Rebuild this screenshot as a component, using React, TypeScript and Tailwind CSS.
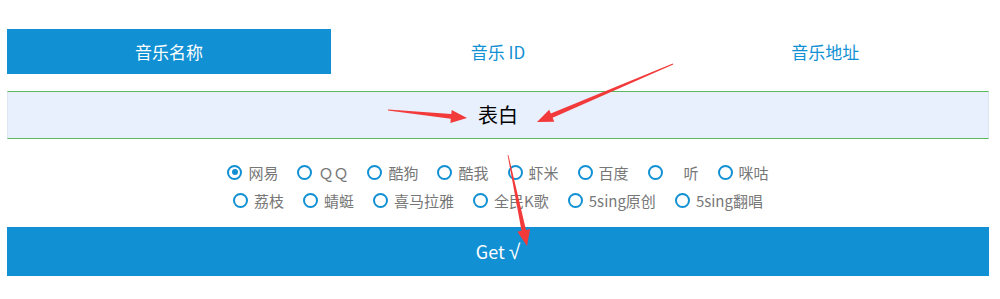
import { useState } from 'react';

const font = { fontFamily: '"Noto Sans CJK SC", "Noto Sans", sans-serif' };

const row1 = ['网易', 'ＱＱ', '酷狗', '酷我', '虾米', '百度', '　听', '咪咕'];
const row2 = ['荔枝', '蜻蜓', '喜马拉雅', '全民K歌', '5sing原创', '5sing翻唱'];

function Arrow({ from, tip }: { from: [number, number]; tip: [number, number] }) {
  const dx = tip[0] - from[0];
  const dy = tip[1] - from[1];
  const len = Math.hypot(dx, dy);
  const ux = dx / len;
  const uy = dy / len;
  const nx = -uy;
  const ny = ux;
  const bx = tip[0] - ux * 16;
  const by = tip[1] - uy * 16;
  const p = (x: number, y: number) => `${x.toFixed(1)},${y.toFixed(1)}`;
  const pts = [
    p(from[0] + nx * 0.4, from[1] + ny * 0.4),
    p(bx + nx * 2.3, by + ny * 2.3),
    p(bx + nx * 6.5, by + ny * 6.5),
    p(tip[0], tip[1]),
    p(bx - nx * 6.5, by - ny * 6.5),
    p(bx - nx * 2.3, by - ny * 2.3),
    p(from[0] - nx * 0.4, from[1] - ny * 0.4),
  ].join(' ');
  return <polygon points={pts} fill="#f23a3a" />;
}

function Radio({ label, checked, onClick }: { label: string; checked: boolean; onClick: () => void }) {
  return (
    <label className="flex items-center gap-[6px] cursor-pointer" onClick={onClick}>
      <span className="w-[15px] h-[15px] rounded-full border-[2.5px] border-[#1190d3] flex items-center justify-center bg-white">
        {checked && <span className="w-[6px] h-[6px] rounded-full bg-[#1190d3]" />}
      </span>
      <span className="text-[15px] text-[#777] leading-none whitespace-pre">{label}</span>
    </label>
  );
}

export default function App() {
  const [tab, setTab] = useState(0);
  const [source, setSource] = useState('网易');
  const tabs = ['音乐名称', '音乐 ID', '音乐地址'];

  return (
    <div className="relative w-[1000px] h-[299px] bg-white overflow-hidden" style={font}>
      <div className="w-[982px] ml-[7px] pt-[29px]">
        {/* Tabs */}
        <div className="grid grid-cols-3">
          {tabs.map((t, i) => (
            <button
              key={t}
              onClick={() => setTab(i)}
              className={
                i === tab
                  ? 'h-[45px] flex items-center justify-center text-[17px] bg-[#1190d3] text-white w-[324px]'
                  : 'h-[45px] flex items-center justify-center text-[17px] text-[#1190d3]'
              }
            >
              {t}
            </button>
          ))}
        </div>

        {/* Input */}
        <div className="mt-[17px] h-[48px] bg-[#e8f0fe] border-t border-b border-l border-r border-t-[#5cb85c] border-b-[#5cb85c] border-l-[#dde5f0] border-r-[#dde5f0] flex items-center justify-center">
          <span className="text-[20px] text-black">表白</span>
        </div>

        {/* Sources */}
        <div className="mt-[19px] flex flex-col items-center">
          <div className="h-[28px] flex items-center gap-x-[19px]">
            {row1.map((s) => (
              <Radio key={s} label={s} checked={source === s} onClick={() => setSource(s)} />
            ))}
          </div>
          <div className="h-[28px] flex items-center gap-x-[19px]">
            {row2.map((s) => (
              <Radio key={s} label={s} checked={source === s} onClick={() => setSource(s)} />
            ))}
          </div>
        </div>

        {/* Submit */}
        <button className="mt-[13px] w-full h-[49px] bg-[#1190d3] text-white text-[18px] flex items-center justify-center">
          Get&nbsp;<span className="text-[21px] leading-none" style={{ fontFamily: '"Liberation Sans", sans-serif' }}>√</span>
        </button>
      </div>

      {/* annotation arrows */}
      <svg className="absolute inset-0 pointer-events-none" width="1000" height="299" viewBox="0 0 1000 299">
        <Arrow from={[388, 110]} tip={[467, 118]} />
        <Arrow from={[673, 64]} tip={[537, 122]} />
        <Arrow from={[508, 155]} tip={[527, 246]} />
      </svg>
    </div>
  );
}
